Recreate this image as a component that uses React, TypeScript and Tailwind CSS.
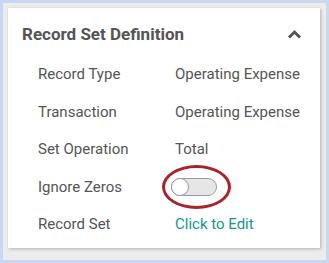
import React from "react";

const rows: { label: string; value: React.ReactNode }[] = [
  { label: "Record Type", value: "Operating Expense" },
  { label: "Transaction", value: "Operating Expense" },
  { label: "Set Operation", value: "Total" },
  { label: "Ignore Zeros", value: "toggle" },
  { label: "Record Set", value: "link" },
];

function Toggle() {
  return (
    <div className="relative ml-[-4px]">
      {/* red highlight ring */}
      <div className="absolute left-[-9px] top-[-13px] w-[69px] h-[44px] rounded-[50%] border-[3px] border-[#a8232a]" />
      <div className="relative w-[46px] h-[18px] rounded-full bg-[#e6e6e6] border border-[#9a9a9a]">
        <div className="absolute left-[-1px] top-[-1px] w-[18px] h-[18px] rounded-full bg-white border border-[#9a9a9a]" />
      </div>
    </div>
  );
}

export default function App() {
  return (
    <div
      className="w-[329px] h-[263px] bg-[#c6d9f1] p-[3px] overflow-hidden"
      style={{ fontFamily: "Roboto, 'Liberation Sans', sans-serif" }}
    >
      <div className="w-full h-full bg-[#ececec] pt-[5px] pl-[5px] pr-[5px] pb-[10px]">
        <div className="w-[312px] h-[240px] bg-white shadow-[1px_1px_3px_rgba(0,0,0,0.25)] px-[14px] pt-[16px]">
          {/* Header */}
          <div className="flex items-center justify-between h-[20px]">
            <span className="text-[17px] font-bold text-[#555555] leading-[20px]">Record Set Definition</span>
            <svg width="15" height="10" viewBox="0 0 15 10" className="mr-[4px]">
              <path d="M2 8.5 L7.5 3 L13 8.5" fill="none" stroke="#555555" strokeWidth="3" />
            </svg>
          </div>

          {/* Rows */}
          <div className="flex flex-col mt-[12px] pl-[16px]">
            {rows.map((r) => (
              <div key={r.label} className="flex items-center h-[37.4px] text-[15px] text-[#555555]">
                <div className="w-[137px]">{r.label}</div>
                <div>
                  {r.value === "toggle" ? (
                    <Toggle />
                  ) : r.value === "link" ? (
                    <span className="text-[#17968c]">Click to Edit</span>
                  ) : (
                    r.value
                  )}
                </div>
              </div>
            ))}
          </div>
        </div>
      </div>
    </div>
  );
}
